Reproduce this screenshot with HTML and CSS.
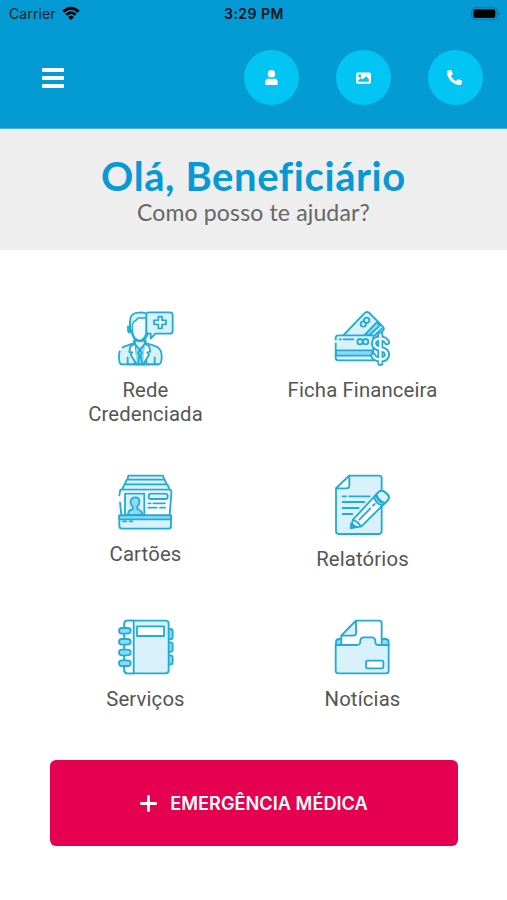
FILE: index.html
```html
<!DOCTYPE html>
<html lang="pt-BR">
<head>
<meta charset="utf-8">
<meta name="viewport" content="width=device-width">
<title>Beneficiário</title>
<link rel="stylesheet" href="styles.css">
</head>
<body>
<header class="header">
  <div class="status">
    <div class="carrier"><span class="carrier-name">Carrier</span>
      <svg width="18" height="14" viewBox="0 0 54 42"><path d="M1 14Q27-9 53 14L47 20Q27 2 7 20ZM10 23Q27 8 44 23L38 29Q27 19 16 29ZM18 33Q27 24 36 33L27 42Z"/></svg>
    </div>
    <time class="clock">3:29 PM</time>
    <svg class="battery" width="30" height="14" viewBox="0 0 90 42"><rect x="2" y="2" width="76" height="36" rx="10" fill="none" stroke="#087299" stroke-width="3"/><rect x="7" y="7" width="66" height="26" rx="6"/><path d="M82 13q8 7 0 14z" fill="#087299"/></svg>
  </div>
  <nav class="toolbar">
    <button class="menu" aria-label="Menu"><span></span><span></span><span></span></button>
    <div class="actions">
      <button class="action" aria-label="Perfil"><svg width="13" height="15" viewBox="0 0 42 48"><circle cx="21" cy="12" r="12"/><path d="M1 45V39Q1 27 14 27Q21 31 28 27Q41 27 41 39V45Q41 48 38 48H4Q1 48 1 45Z"/></svg></button>
      <button class="action" aria-label="Imagem"><svg width="15" height="12" viewBox="0 0 48 36"><path fill-rule="evenodd" d="M5 0H43Q48 0 48 5V31Q48 36 43 36H5Q0 36 0 31V5Q0 0 5 0ZM12 6A5 5 0 1 0 12 16A5 5 0 1 0 12 6ZM7 30H41V21L32 12L21 23L16 18L7 26Z"/></svg></button>
      <button class="action" aria-label="Telefone"><svg class="phone" width="15" height="15" viewBox="0 0 512 512"><path transform="translate(512 0) scale(-1 1)" d="M493 24.300l-104-24c-11-2.600-23 3-28 14l-48 112c-4 10-1 22 7 29l61 50a371 371 0 0 1-176 176l-50-61c-7-8-19-11-29-7l-112 48c-11 5-16 17-14 28l24 104c3 11 13 19 24 19C304 512 512 304 512 48c0-11-8-21-19-23.700z"/></svg></button>
    </div>
  </nav>
</header>
<section class="greeting">
  <h1>Olá, Beneficiário</h1>
  <p>Como posso te ajudar?</p>
</section>
<main class="content">
  <div class="grid">
    <a class="item provider">
      <svg class="icon" viewBox="0 0 240 225">
        <path class="pale" d="M50 193Q41 193 42 165Q43 142 66 137L87 129V122H122V129L147 137Q169 143 170 165Q171 193 161 193Z"/>
        <path class="pale" d="M75 88V64Q75 39 101 38Q115 36 129 42V92Q127 122 104 124Q82 121 80 92Z"/>
        <path class="pale-line" d="M82 88Q80 72 87 65Q94 61 99 54H124V91Q122 119 104 121Q83 118 82 88Z"/>
        <path d="M75 98V70M69 79V90Q69 97 76 98M90 118V131M119 118V131M68 193V172"/>
        <path class="mid" d="M91 134L105 149L118 134L125 193H89Z"/>
        <path class="white" d="M89 132L76 139L73 156L82 157L77 164L95 193M119 132L132 138L136 155L127 157L132 164L115 193"/>
        <path d="M105 149L99 159L103 166L99 193M105 149L110 159L107 166L112 193M149 172V193M67 193H161"/>
        <path class="gap" d="M45 152L50 143"/>
        <path class="pale" d="M131 37H195Q203 37 203 45V92Q203 101 194 101H151L137 116V101H131Q124 101 124 93V45Q124 37 131 37Z"/>
        <path class="white" d="M160 50H171V61H183V73H171V85H160V73H147V61H160Z"/>
      </svg><span>Rede<br>Credenciada</span></a>
    <a class="item finance">
      <svg class="icon" viewBox="0 0 240 225">
        <path class="pale" d="M65 105L127 40Q134 32 142 39L182 79Q189 86 182 93L160 114"/>
        <path class="mid" d="M164 67L174 76L143 105H128Z"/><path d="M180 85L158 106"/>
        <circle class="pale" cx="124" cy="72" r="8"/><circle class="pale" cx="134" cy="61" r="8"/>
        <path class="pale" d="M49 106H154V181H49Q41 181 41 174V114Q41 106 49 106Z"/>
        <path class="mid" d="M42 151H151V167H42Z"/><path d="M53 118H57M65 118H94"/>
        <path class="gap" d="M41 121V128"/>
        <circle class="pale" cx="114" cy="125" r="8"/><circle class="pale" cx="131" cy="125" r="8"/>
        <path class="dollar-outline" d="M175 104V189M195 127Q190 116 175 116Q156 116 156 130Q156 143 175 147Q195 151 195 164Q194 178 175 178Q158 178 154 167"/>
        <path class="dollar-inner" d="M175 104V189M195 127Q190 116 175 116Q156 116 156 130Q156 143 175 147Q195 151 195 164Q194 178 175 178Q158 178 154 167"/>
      </svg><span>Ficha Financeira</span></a>
    <a class="item cards">
      <svg class="icon" viewBox="0 0 240 225">
        <path class="pale" d="M67 44L70 32H174L178 44M59 58L65 44H179L185 58M52 73L58 58H187L194 73"/>
        <path class="white" d="M49 150L45 112M43 91L46 74H193Q200 74 199 84L194 150"/>
        <rect class="pale" x="60" y="86" width="58" height="64"/>
        <path class="mid" d="M69 150Q69 134 83 133V124Q75 117 77 107Q80 97 91 97Q104 97 103 111Q103 118 97 124V133Q111 135 112 150Z"/>
        <rect class="pale" x="131" y="86" width="57" height="16" rx="7"/>
        <path d="M130 115H137M145 115H180M130 128H155M165 128H180"/>
        <path class="pale" d="M43 151H198V184Q198 191 190 191H52Q43 191 43 183Z"/><path class="mid" d="M43 151H198V163H43Z"/><path d="M54 169H64M74 169H82"/>
      </svg><span>Cartões</span></a>
    <a class="item reports">
      <svg class="icon" viewBox="0 0 240 225">
        <path class="pale" d="M82 32H171Q179 32 179 40V199Q179 207 171 207H50Q42 207 42 199V70Z"/>
        <path class="white" d="M82 32V61Q82 70 74 70H42Z"/>
        <path d="M62 94H72M82 94H143M62 111H127M62 129H110M62 147H91"/>
        <path class="white" d="M93 164L168 83Q177 73 188 81L195 87Q206 96 196 107L118 184L86 189Z"/>
        <path class="pale" d="M163 89L168 83Q177 73 188 81L195 87Q206 96 196 107L188 115Q170 108 163 89Z"/>
        <path class="mid" d="M163 88Q166 111 187 114L181 121Q159 117 157 95Z"/>
        <path d="M93 164L105 171L118 184M112 164L145 130M153 122L158 117"/>
        <path class="tip" d="M88 175L86 189L101 185Z"/>
      </svg><span>Relatórios</span></a>
    <a class="item services">
      <svg class="icon" viewBox="0 0 240 225">
        <path class="mid" d="M189 57H196Q203 57 203 64V80Q203 88 194 88H189ZM189 97H196Q203 97 203 104V118Q203 126 194 126H189ZM189 136H196Q203 136 203 143V156Q203 164 194 164H189Z"/>
        <rect class="pale" x="58" y="32" width="133" height="158" rx="9"/><path class="white" d="M67 32H86V190H67Q58 190 58 181V41Q58 32 67 32Z"/>
        <rect class="white" x="96" y="49" width="81" height="29"/>
        <g class="mid"><rect x="42" y="54" width="35" height="17" rx="8.500"/><rect x="42" y="87" width="35" height="17" rx="8.500"/><rect x="42" y="119" width="35" height="17" rx="8.500"/><rect x="42" y="151" width="35" height="17" rx="8.500"/></g>
      </svg><span>Serviços</span></a>
    <a class="item news">
      <svg class="icon" viewBox="0 0 240 225">
        <path class="mid" d="M42 106V96Q42 87 51 87H190Q200 87 200 97V106"/>
        <path class="white" d="M58 105V78L102 32H171Q179 32 179 40V105Z"/>
        <path class="pale" d="M102 32V69Q102 77 94 77H58Z"/>
        <path class="pale" d="M41 105H105Q114 105 115 96V92Q116 82 125 82H150Q158 82 160 91V97Q161 105 169 105H200V182Q200 190 192 190H50Q41 190 41 182Z"/>
        <rect class="white" x="132" y="152" width="52" height="23" rx="4"/>
      </svg><span>Notícias</span></a>
  </div>
  <button class="emergency"><svg width="17" height="17" viewBox="0 0 16 16"><path d="M8 1.300V14.700M1.300 8H14.700"/></svg><span>EMERGÊNCIA MÉDICA</span></button>
</main>
</body>
</html>
```
FILE: styles.css
```css
* { box-sizing: border-box; }
body { margin: 0; background: #fff; color: #555; font-family: Roboto, sans-serif; }
button { border: 0; padding: 0; font: inherit; }
.header { height: 129px; background: #049bd5; border-bottom: 1px solid #47b3dc; }
.status { height: 27px; padding: 0 6px 0 9px; display: grid; grid-template-columns: 1fr auto 1fr; align-items: center; color: #06202b; font-family: Inter, sans-serif; }
.carrier { display: flex; align-items: center; gap: 6px; font-size: 14px; }
.carrier-name { letter-spacing: .1px; }
.carrier svg { fill: #000; margin-top: -2px; }
.clock { font-size: 14px; font-weight: 600; letter-spacing: .5px; margin-right: 2px; color: #03141c; }
.battery { justify-self: end; }
.toolbar { height: 101px; display: flex; justify-content: space-between; align-items: center; padding: 0 24.500px 0 42px; }
.menu { width: 22px; height: 20px; display: flex; flex-direction: column; justify-content: space-between; background: none; }
.menu span { height: 4px; border-radius: 1px; background: #fff; }
.actions { display: flex; gap: 36.700px; }
.action { width: 55px; height: 55px; border-radius: 50%; background: #03c5f4; display: flex; align-items: center; justify-content: center; }
.action svg { fill: #fff; }
.phone { margin-right: 2px; }
.greeting { height: 121px; padding-top: 25px; background: #eee; text-align: center; font-family: Lato, sans-serif; }
h1 { margin: 0; color: #0799d5; font-size: 40px; line-height: 44px; font-weight: 700; letter-spacing: .6px; white-space: nowrap; }
.greeting p { margin: 0; font-size: 23px; line-height: 28px; color: #666; letter-spacing: .15px; }
.content { padding-top: 50px; }
.grid { display: grid; grid-template-columns: 217px 217px; grid-template-rows: 165px 145px 150px; margin-left: 37px; }
.item { display: flex; flex-direction: column; align-items: center; text-align: center; font-size: 20.300px; line-height: 24px; letter-spacing: .15px; gap: 3px; }
.cards { gap: 2px; }
.reports { gap: 7px; }
.services, .news { gap: 2px; }
.icon { width: 80px; height: 75px; margin-right: 2px; flex: none; fill: none; stroke: #21acd8; stroke-width: 5.500; stroke-linecap: round; stroke-linejoin: round; }
.pale { fill: #d9f1fa; }
.pale-line { fill: #f1fafd; stroke-width: 4; }
.mid { fill: #8edaf3; }
.white { fill: #fff; }
.tip { fill: #21acd8; }
.gap { stroke: #fff; stroke-width: 7; stroke-linecap: butt; }
.dollar-outline { stroke-width: 18; }
.dollar-inner { stroke: #fff; stroke-width: 7; }
.emergency { width: 408px; height: 86px; margin-left: 50px; border-radius: 6px; background: #e60050; color: #fff; display: flex; align-items: center; justify-content: center; gap: 13px; font: 600 18.200px Inter, sans-serif; }
.emergency svg { fill: none; stroke: #fff; stroke-width: 2.700; stroke-linecap: round; }
```
